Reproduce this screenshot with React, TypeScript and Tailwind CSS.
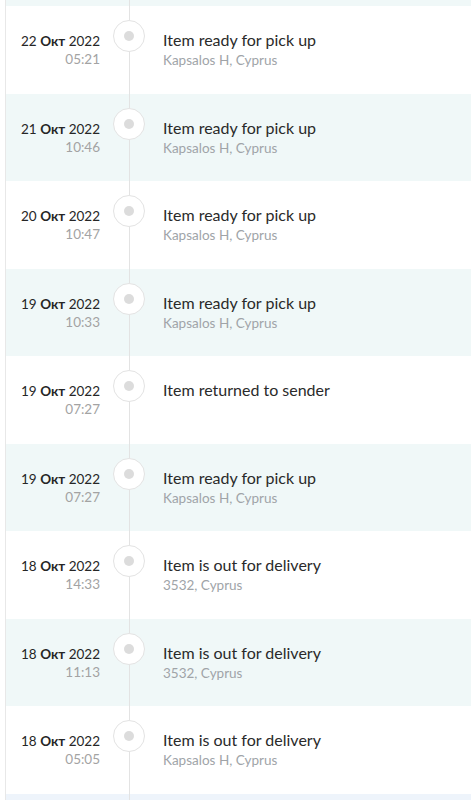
const events = [
  { day: '22', time: '05:21', title: 'Item ready for pick up', place: 'Kapsalos H, Cyprus' },
  { day: '21', time: '10:46', title: 'Item ready for pick up', place: 'Kapsalos H, Cyprus' },
  { day: '20', time: '10:47', title: 'Item ready for pick up', place: 'Kapsalos H, Cyprus' },
  { day: '19', time: '10:33', title: 'Item ready for pick up', place: 'Kapsalos H, Cyprus' },
  { day: '19', time: '07:27', title: 'Item returned to sender', place: '' },
  { day: '19', time: '07:27', title: 'Item ready for pick up', place: 'Kapsalos H, Cyprus' },
  { day: '18', time: '14:33', title: 'Item is out for delivery', place: '3532, Cyprus' },
  { day: '18', time: '11:13', title: 'Item is out for delivery', place: '3532, Cyprus' },
  { day: '18', time: '05:05', title: 'Item is out for delivery', place: 'Kapsalos H, Cyprus' },
]

function Row({ ev, tinted }: { ev: (typeof events)[number]; tinted: boolean }) {
  return (
    <div className={`flex h-[87.5px] pl-px ${tinted ? 'bg-[#f0f8f8]' : 'bg-white'}`}>
      {/* date */}
      <div className="w-[93px] shrink-0 pt-[26px] text-right leading-[18px]">
        <div className="text-[13.5px] text-[#262626]">
          {ev.day} <span className="font-bold">Окт</span> 2022
        </div>
        <div className="text-[13.5px] text-[#a3a3a3]">{ev.time}</div>
      </div>
      {/* timeline */}
      <div className="ml-[13px] flex w-[32px] shrink-0 flex-col items-center">
        <div className="h-[14px] w-px bg-[#e3e3e3]" />
        <div className="flex h-[32px] w-[32px] items-center justify-center rounded-full border border-[#e3e3e3] bg-white">
          <div className="h-[10px] w-[10px] rounded-full bg-[#dcdcdc]" />
        </div>
        <div className="w-px flex-1 bg-[#e3e3e3]" />
      </div>
      {/* status */}
      <div className="ml-[18px] pt-[23px]">
        <div className="text-[16px] leading-[22px] text-[#2a2a2a]">{ev.title}</div>
        {ev.place && <div className="mt-px text-[13.5px] leading-[17px] text-[#a0a4a8]">{ev.place}</div>}
      </div>
    </div>
  )
}

export default function App() {
  return (
    <div className="h-[800px] w-[471px] overflow-hidden bg-white pl-[5px] font-['Lato',sans-serif]">
      <div className="border-l border-[#e8e8e8]">
        <div className="flex h-[6px] pl-px bg-[#f0f8f8]">
          <div className="ml-[122px] w-px bg-[#e3e3e3]" />
        </div>
        {events.map((ev, i) => (
          <Row key={i} ev={ev} tinted={i % 2 === 1} />
        ))}
        <div className="flex h-[10px] pl-px bg-[#eef4fb]">
          <div className="ml-[122px] w-px bg-[#e3e3e3]" />
        </div>
      </div>
    </div>
  )
}
